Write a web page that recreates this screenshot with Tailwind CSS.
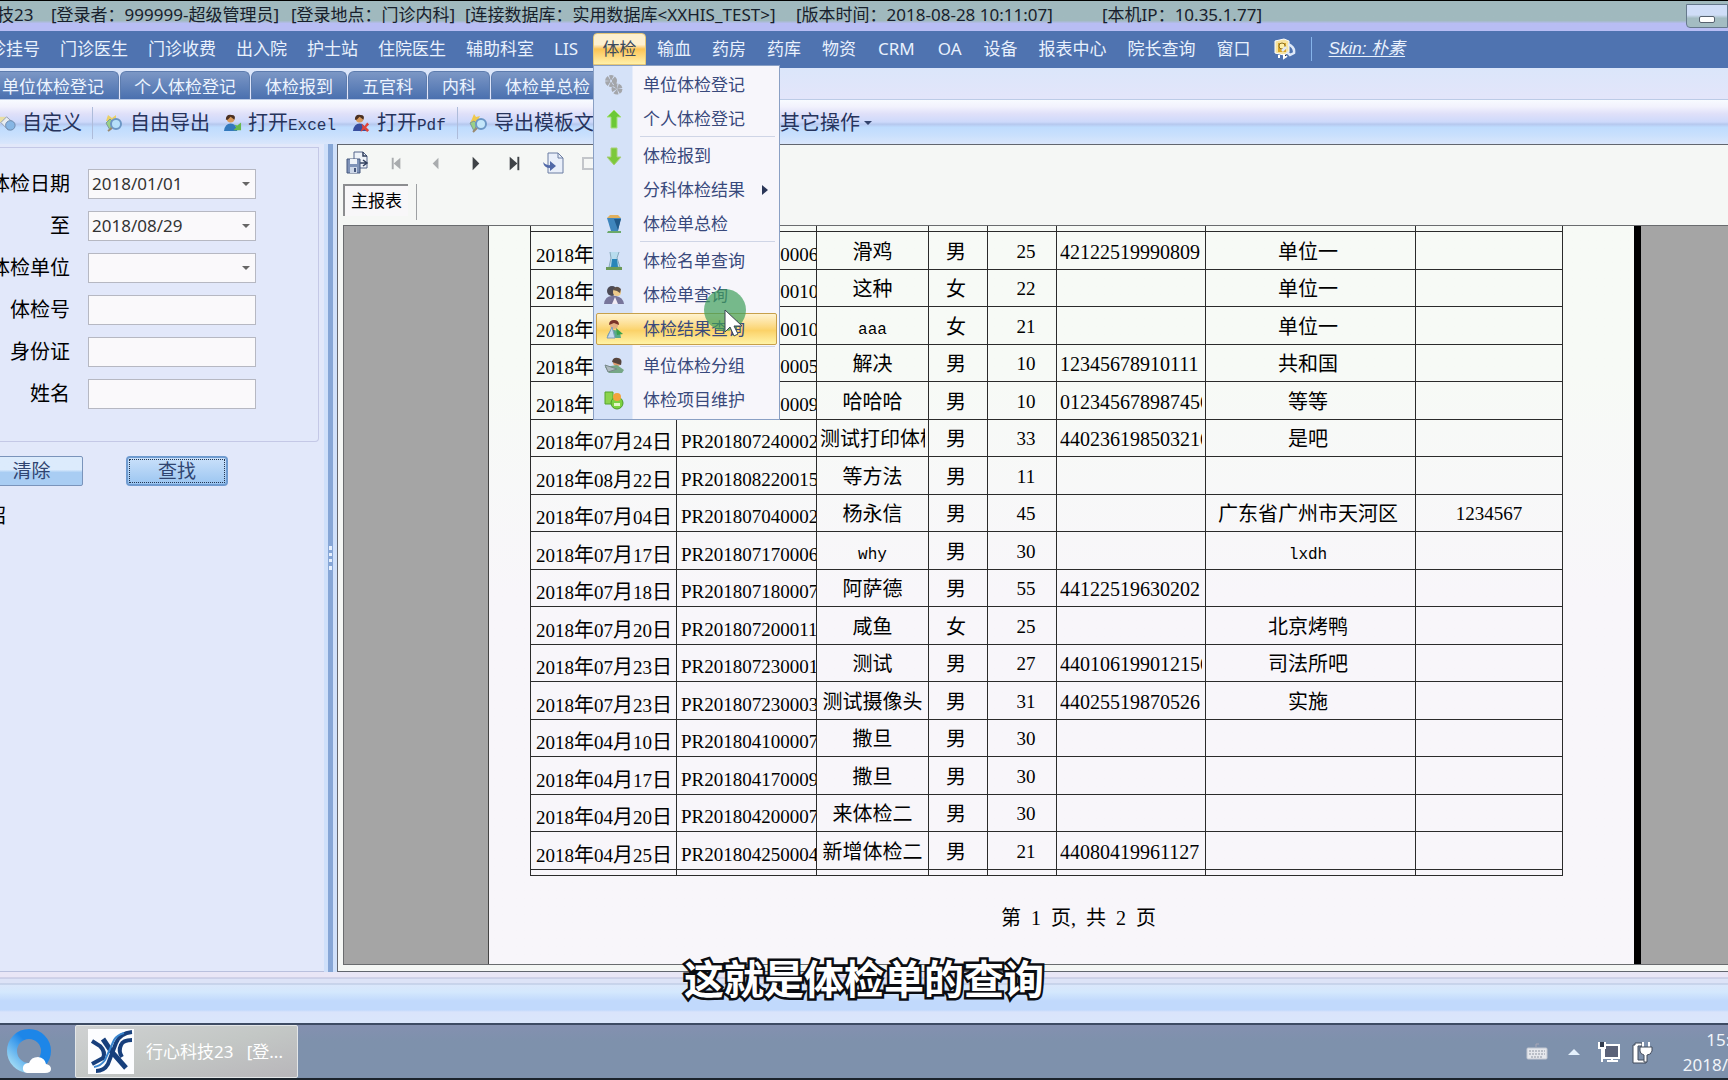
<!DOCTYPE html>
<html lang="zh-CN">
<head>
<meta charset="utf-8">
<title>行心科技23</title>
<script src="https://cdn.jsdelivr.net/npm/@tailwindcss/browser@4"></script>
</head>
<body class="relative flex min-h-screen flex-col overflow-x-hidden bg-[#e2e8fa] font-['Noto_Sans','Noto_Sans_CJK_SC',sans-serif] text-[17px] leading-6 text-black">

<header class="flex h-[31px] items-center justify-between overflow-hidden border-t border-black bg-linear-to-b from-[#a0b9be] from-65% to-[#b8bdf4] to-75%">
  <div class="-ml-[54px] flex h-full items-center whitespace-pre pb-0.5 text-[#17202c]">
    <span class="w-[105px]">行心科技23</span>
    <span class="w-60">[登录者：999999-超级管理员]</span>
    <span class="w-[174px]">[登录地点：门诊内科]</span>
    <span class="w-[331px]">[连接数据库：实用数据库&lt;XXHIS_TEST&gt;]</span>
    <span class="w-[306px]">[版本时间：2018-08-28 10:11:07]</span>
    <span>[本机IP：10.35.1.77]</span>
  </div>
  <button aria-label="最小化" class="flex h-6 w-[42px] items-end justify-center rounded-bl border border-[#66798d] bg-linear-to-b from-[#cfddf7] from-45% to-[#a3bcc2] to-60% pb-1"><span class="h-[7px] w-4 rounded-xs border border-[#56616f] bg-white"></span></button>
</header>

<nav class="flex h-[37px] items-center bg-[#4f73b0] pb-0.5 text-[#e9f1fd]">
  <div class="-ml-[28px] flex gap-[20px] whitespace-nowrap">
    <a href="#">门诊挂号</a><a href="#">门诊医生</a><a href="#">门诊收费</a><a href="#">出入院</a><a href="#">护士站</a><a href="#">住院医生</a><a href="#">辅助科室</a><a href="#">LIS</a>
  </div>
  <div class="relative ml-[15px]">
    <button class="h-8 w-[53px] rounded-t-sm border border-[#e6c878] bg-linear-to-b from-[#fdf0cf] from-35% via-[#fbc351] via-50% to-[#fff0a8] text-[#3c4a5c]">体检</button>
    <div class="absolute left-0 top-8 z-10 flex w-[187px] flex-col border border-[#8aa0c4] bg-[linear-gradient(90deg,#d5e2f8_38px,#f7f6fb_39px)] py-0.5 text-[#39497c]" role="menu" id="menu"></div>
  </div>
  <div class="ml-[11px] flex items-center gap-[21px] whitespace-nowrap">
    <a href="#">输血</a><a href="#">药房</a><a href="#">药库</a><a href="#">物资</a><a href="#" class="px-px">CRM</a><a href="#" class="px-px">OA</a><a href="#">设备</a><a href="#">报表中心</a><a href="#">院长查询</a><a href="#">窗口</a>
    <svg class="size-6" viewBox="0 0 24 24"><path d="M3 4l9-2 5 2v11l-5 3-9-2z" fill="#f6e3a0" stroke="#fff" /><path d="M6 6h8v9H6z" fill="#d9a62c"/><circle cx="10" cy="9" r="3" fill="#fff0a8" stroke="#8a6d20"/><path d="M10 14l4-4M16 7q7 3 6 9l-4 2-3-3" fill="none" stroke="#dfe9f8" stroke-width="2.5"/><path d="M7 18v3M12 17v4l3-2" stroke="#fff" stroke-width="2"/></svg>
    <span class="-ml-1.5 h-6 w-px bg-[#86b4ea]"></span>
    <a href="#" class="-ml-1 font-['Liberation_Sans','Noto_Sans_CJK_SC',sans-serif] italic underline underline-offset-2">Skin: 朴素</a>
  </div>
</nav>

<div class="flex h-8 items-end gap-px overflow-hidden whitespace-nowrap border-b border-[#bccbe6] bg-linear-to-b from-[#dbe6fa] to-[#e3e5fa] text-[#edf4ff]" role="tablist">
  <button role="tab" class="-ml-[13px] h-7 rounded-t-md border border-b-0 border-[#5d7cae] bg-linear-to-b from-[#7c97c5] to-[#4a70af] px-[14px] pt-0.5">单位体检登记</button>
  <button role="tab" class="h-7 rounded-t-md border border-b-0 border-[#5d7cae] bg-linear-to-b from-[#7c97c5] to-[#4a70af] px-[13px] pt-0.5">个人体检登记</button>
  <button role="tab" class="h-7 rounded-t-md border border-b-0 border-[#5d7cae] bg-linear-to-b from-[#7c97c5] to-[#4a70af] px-[13px] pt-0.5">体检报到</button>
  <button role="tab" class="h-7 rounded-t-md border border-b-0 border-[#5d7cae] bg-linear-to-b from-[#7c97c5] to-[#4a70af] px-[13px] pt-0.5">五官科</button>
  <button role="tab" class="h-7 rounded-t-md border border-b-0 border-[#5d7cae] bg-linear-to-b from-[#7c97c5] to-[#4a70af] px-[13px] pt-0.5">内科</button>
  <button role="tab" class="h-7 rounded-t-md border border-b-0 border-[#5d7cae] bg-linear-to-b from-[#7c97c5] to-[#4a70af] px-[13px] pt-0.5">体检单总检</button>
</div>

<div class="flex h-11 items-center whitespace-nowrap bg-[linear-gradient(180deg,#f8fbff_0%,#f2f2fd_15%,#dfe0f9_32%,#cdd9fb_50%,#b6c8ee_55%,#bfdcfe_62%,#c9e0fd_80%,#dae6fb_100%)] pt-0.5 text-xl text-[#26335c]">
  <button class="-ml-0.5 flex w-[94px] items-center gap-[5px]"><svg class="size-[19px] shrink-0" viewBox="0 0 20 20"><path d="M1 3h8v6H1z" fill="#e9dfa4"/><path d="M3 9l6-6 8 7-6 7z" fill="#e8edf2" stroke="#8e9bb0"/><circle cx="13" cy="12" r="5" fill="#86b6e4" stroke="#6d87aa"/></svg>自定义</button>
  <span class="h-8 w-px bg-[#aebcda]"></span>
  <button class="ml-[11px] flex w-[119px] items-center gap-[6px]"><svg class="size-5 shrink-0" viewBox="0 0 20 20"><path d="M4 2l4 3 4-3v6H2z" fill="#ead067"/><path d="M2 10l4-4 3 3-3 8z" fill="#9ad087" stroke="#7c9a99"/><circle cx="12" cy="11" r="5" fill="#b6e0fa" stroke="#6c97c6" stroke-width="2"/><path d="M8 15l-4 3" stroke="#9a8a70" stroke-width="2"/></svg>自由导出</button>
  <button class="flex w-[129px] items-center gap-[6px]"><svg class="size-[19px] shrink-0" viewBox="0 0 20 20"><circle cx="8" cy="5" r="4" fill="#d99a5c"/><path d="M3 6q0-6 6-5 5 0 3 5l-4-3-3 3z" fill="#4b3022"/><path d="M1 18q1-8 7-8t7 8z" fill="#3379bd"/><path d="M19 9v8h-8l3-3-2-3 3 1z" fill="#67b94c"/></svg><span>打开<span class="font-['Liberation_Mono',monospace] text-base">Excel</span></span></button>
  <button class="flex w-[105px] items-center gap-[6px]"><svg class="size-[19px] shrink-0" viewBox="0 0 20 20"><circle cx="8" cy="5" r="4" fill="#d99a5c"/><path d="M3 6q0-6 6-5 5 0 3 5l-4-3-3 3z" fill="#4b3022"/><path d="M1 18q1-8 7-8t7 8z" fill="#394e9e"/><path d="M10 10l3 3 3-4 2 2-3 3 3 3-2 2-3-3-4 3 2-5z" fill="#e04338"/></svg><span>打开<span class="font-['Liberation_Mono',monospace] text-base">Pdf</span></span></button>
  <span class="h-8 w-px bg-[#aebcda]"></span>
  <button class="ml-[10px] flex w-[312px] items-center gap-[6px]"><svg class="size-5 shrink-0" viewBox="0 0 20 20"><path d="M6 1l2 3 4-1-2 4 3 3H2l2-4z" fill="#efc94d"/><path d="M2 10l4-2 3 3-3 7z" fill="#9ad087" stroke="#7c9a99"/><circle cx="13" cy="11" r="5" fill="#c3e6fa" stroke="#6c97c6" stroke-width="2"/><path d="M9 15l-4 4" stroke="#9a8a70" stroke-width="2"/></svg>导出模板文件</button>
  <button class="flex items-center gap-1">其它操作<span class="border-x-4 border-t-4 border-x-transparent border-t-[#33436c]"></span></button>
</div>

<main class="flex flex-1">
  <aside class="flex w-[324px] shrink-0 flex-col overflow-hidden border-b border-[#b9c0dd]">
    <form id="filters" class="mr-[5px] mt-[3px] flex h-[295px] flex-col gap-3 rounded-br border-b border-r border-t border-[#c4c8e6] pt-[21px] text-xl"></form>
    <div class="mt-[14px] flex gap-[43px] text-[19px] text-[#2f4470]">
      <button class="-ml-5 h-[30px] w-[103px] rounded-xs border border-[#7a94bb] bg-linear-to-b from-[#dcebfc] from-45% to-[#a9cdf3] to-55%">清除</button>
      <button class="h-[30px] w-[102px] rounded-sm border-2 border-[#6f9bd0] bg-linear-to-b from-[#c9e0fa] to-[#9cc6f1] p-px"><span class="flex h-full items-center justify-center border border-dotted border-[#22344f]">查找</span></button>
    </div>
    <p class="-ml-[14px] mt-4 text-xl">绍</p>
  </aside>
  <div class="flex w-[13px] shrink-0 items-center justify-center border-x-4 border-[#cfe0fa] bg-[#86a6d6]"><span class="h-6 border-l-3 border-dotted border-[#e7f0fd]"></span></div>

  <section class="flex min-w-0 flex-1 flex-col border border-r-0 border-[#62666f] bg-[#f5f7f5] pl-[5px]">
    <div class="flex h-9 items-center gap-4 pl-[3px]" role="toolbar">
      <button aria-label="保存"><svg class="size-6" viewBox="0 0 24 24"><path d="M8 1h9l4 4v12H8z" fill="#eef2f8" stroke="#55658a"/><path d="M17 1v4h4M14 12h6M17 9l4 3-4 3" fill="none" stroke="#33415f" stroke-width="1.5"/><path d="M1 8h13v14H1z" fill="#7f93b8" stroke="#45567c"/><path d="M4 8h7v5H4z" fill="#eef2f8"/><path d="M4 16h7v6H4z" fill="#cdd7e8"/><path d="M8 17h2v4H8z" fill="#45567c"/></svg></button>
      <button aria-label="首页"><svg class="size-[23px]" viewBox="0 0 24 24"><path d="M7 6v12" stroke="#a9acae" stroke-width="2"/><path d="M15 6v12l-7-6z" fill="#a9acae"/></svg></button>
      <button aria-label="上一页"><svg class="size-[23px]" viewBox="0 0 24 24"><path d="M14 6v12l-6-6z" fill="#a9acae"/></svg></button>
      <button aria-label="下一页"><svg class="size-[23px]" viewBox="0 0 24 24"><path d="M9 5v14l7-7z" fill="#3e4246"/></svg></button>
      <button aria-label="末页"><svg class="size-[23px]" viewBox="0 0 24 24"><path d="M7 5v14l8-7z" fill="#3e4246"/><path d="M16 5v14" stroke="#3e4246" stroke-width="2"/></svg></button>
      <button aria-label="导出"><svg class="size-6" viewBox="0 0 24 24"><path d="M6 2h10l5 5v15H6z" fill="#e9effa" stroke="#6b7ca2"/><path d="M16 2v5h5" fill="none" stroke="#6b7ca2"/><path d="M1 11q3 4 7 3v-4l6 5-6 5v-3q-6 0-7-6z" fill="#5169a8"/></svg></button>
      <button aria-label="打印"><svg class="size-6" viewBox="0 0 24 24"><path d="M1 7h13v11H1z" fill="none" stroke="#c3c6ca" stroke-width="2"/></svg></button>
    </div>
    <div class="flex h-11 items-start">
      <button class="mt-[3px] h-8 w-[65px] border-l-2 border-t-2 border-[#8c8d90] bg-[#f8f7f9]">主报表</button>
      <span class="ml-2 mt-[3px] h-9 w-px bg-[#9da0a3]"></span>
    </div>
    <div class="mb-1.5 flex flex-1 border-y border-l border-[#6a6c6f] bg-[#a5a5a5]">
      <div class="w-36 shrink-0"></div>
      <article class="min-w-0 flex-1 border-l border-[#444] bg-linear-to-b from-[#f7faf6] from-20% to-[#f8f6fa] to-50% pl-[41px]">
        <table class="w-[1033px] table-fixed border-separate border-spacing-0 border-l border-[#2b2b2b]">
          <colgroup><col class="w-[146px]"><col class="w-[140px]"><col class="w-[112px]"><col class="w-[59px]"><col class="w-[69px]"><col class="w-[149px]"><col class="w-[210px]"><col class="w-[147px]"></colgroup>
          <tbody id="rows"></tbody>
        </table>
        <p class="ml-[466px] mt-7 whitespace-pre font-['Liberation_Serif','Noto_Sans_CJK_SC',serif] text-xl"> 第  1  页,  共  2  页</p>
      </article>
      <div class="w-[7px] shrink-0 bg-black"></div>
      <div class="w-[87px] shrink-0"></div>
    </div>
  </section>
</main>

<div class="h-[51px] shrink-0 bg-[linear-gradient(180deg,#e9e6f6_0,#e9e6f6_5px,#b9bdda_6px,#dde3f7_7px,#dde3f7_11px,#b4c2dd_12px,#dbe7fb_13px,#d4e8fd_20px,#c1d9fc_29px,#c1d9fc_38px,#dae4fb_40px,#dae6fb_100%)]"></div>

<footer class="flex h-[57px] shrink-0 items-center overflow-hidden border-b-2 border-t-2 border-b-[#1c242c] border-t-[#3d4b63] bg-linear-to-b from-[#8490b0] to-[#7e91ac] to-30%">
  <a href="#" aria-label="浏览器" class="ml-[7px]"><svg class="h-[46px] w-[46px]" viewBox="0 0 46 46"><defs><linearGradient id="ring" x1="1" y1="0" x2="0" y2="1"><stop offset=".4" stop-color="#1d86e8"/><stop offset="1" stop-color="#a9e0f5"/></linearGradient></defs><circle cx="22" cy="22" r="17" fill="none" stroke="url(#ring)" stroke-width="10"/><path d="M20 44q-5-1-4-6 1-4 6-4 2-6 9-6 7 1 8 7 5 1 5 5t-6 4z" fill="#fff"/></svg></a>
  <button class="ml-[22px] flex h-[53px] w-[223px] items-center gap-3 rounded-xs border border-[#e3e6e8] bg-linear-to-br from-[#cfd1d2] via-[#c3c7c5] to-[#b8b6ba] pl-3 text-white">
    <svg class="h-[45px] w-[46px] shrink-0" viewBox="0 0 46 45"><path fill="#fcfdff" d="M0 0h46v45H0z"/><g fill="none" stroke="#173f7c" stroke-width="4"><path d="M4 12l8 5q6 6 3 12l-11 6M8 42q8 0 12-7l8-21Q32 4 44 3M44 11q-9 0-11 5-3 6 1 12"/><path d="M15 10l8 12 15 17" stroke-width="5"/><path d="M6 38q7-1 11-7l9-20Q29 6 36 4" stroke="#3b86cf" stroke-width="2"/></g></svg>
    <span class="whitespace-pre">行心科技23   [登...</span>
  </button>
  <div class="-mr-[46px] ml-auto flex items-center text-[#f1f5fa]">
    <svg class="h-5 w-[22px]" viewBox="0 0 22 20"><path d="M10 5V2h3" stroke="#a7a6b5" fill="none"/><rect x="1" y="6" width="20" height="11" rx="1" fill="#e5e7ec" stroke="#c2c7d1"/><path d="M3 9h16M3 12h16M5 15h12" stroke="#8f96a3" stroke-dasharray="2 1"/></svg>
    <span class="ml-5 border-x-6 border-b-6 border-x-transparent border-b-[#e5f1fc]"></span>
    <svg class="ml-[17px] size-6" viewBox="0 0 24 24"><path d="M7 5h15v13H7z" fill="#5b6278" stroke="#fff" stroke-width="2"/><path d="M2 2v6h6V2M5 8v14M10 21h11M15 18v3" fill="none" stroke="#fff" stroke-width="2"/><path d="M3 2v5h4V2" fill="#333c4e"/></svg>
    <svg class="ml-[9px] size-6" viewBox="0 0 24 24"><path d="M5 3h7v3H8v14h8v3H3V5h2z" fill="#fff" stroke="#414a5b"/><path d="M13 2v5M19 2v5" stroke="#fff" stroke-width="2"/><path d="M10 7h12v4q-1 4-5 4v7h-3v-7q-4-1-4-4z" fill="#fff" stroke="#414a5b"/></svg>
    <p class="ml-7 w-[92px] text-center leading-[25px]">15:27<br>2018/08/29</p>
  </div>
</footer>

<p class="absolute bottom-[79px] left-0 right-0 z-20 text-center font-['Noto_Sans_CJK_SC',sans-serif] text-[40px] font-bold leading-[48px] text-white [-webkit-text-stroke:5px_#0b0d12] [paint-order:stroke_fill]">这就是体检单的查询</p>

<script>
const person = (hair, coat, extra) => `<circle cx="10" cy="6" r="4" fill="#e3b083"/><path d="M5 6q0-5 5-5t5 5l-5-2z" fill="${hair}"/><path d="M3 19q1-8 7-8t7 8z" fill="${coat}"/>${extra}`;
const icons = {
  gears: '<g fill="none" stroke="#a4a6aa"><circle cx="7" cy="6" r="3.5" stroke-width="5" stroke-dasharray="3 .7"/><circle cx="13" cy="14" r="3" stroke-width="5" stroke-dasharray="3 .7"/></g>',
  up: '<path d="M10 1l7 7h-4v11H7V8H3z" fill="#6cc936" stroke="#a6e07d"/>',
  down: '<path d="M10 19l7-8h-4V2H7v9H3z" fill="#7cc93b" stroke="#a9cf79"/>',
  bin: '<path d="M3 4h14l-3 13H7z" fill="#3f86bd"/><path d="M10 5h7l-3 11z" fill="#215a8b"/><path d="M3 4l3-3 8 0 3 3z" fill="#e0b05f"/><path d="M4 17h13v2H3z" fill="#6ba96a"/>',
  flask: '<path d="M6 1l1 6-2 9h11l-3-9 2-6" fill="#b8dcee" stroke="#88a9bd"/><path d="M8 8h5l1 8H7z" fill="#2885b9"/><path d="M2 16h16v3H2z" fill="#6b9a58"/>',
  pair: '<circle cx="8" cy="6" r="5" fill="#4c4a55"/><circle cx="13" cy="7" r="4" fill="#edca8b"/><path d="M9 5q3-6 8-1l-1 4-3-2z" fill="#5d5048"/><path d="M0 19q1-8 8-8h4q7 1 8 8z" fill="#77759b"/><path d="M8 19l3-7 3 7z" fill="#f1ecf4"/>',
  green: person('#7a3329', '#58a98a', '<path d="M3 19l5-11 3 11z" fill="#c5d9ec" stroke="#7d9cc0"/><path d="M12 9l7 6-6 1z" fill="#39a14c"/>'),
  group: '<circle cx="13" cy="6" r="4" fill="#dc9a6d"/><path d="M8 6q1-5 6-4 5 1 3 7z" fill="#55443d"/><path d="M1 11l12-2 7 5-2 3H5z" fill="#76a786"/><path d="M1 9l12 4-9 3z" fill="#aeb9be" stroke="#788"/>',
  items: '<path d="M1 2h8v12H1z" fill="#8bd34d" stroke="#55a52d"/><circle cx="13" cy="13" r="6" fill="#7bd13f" stroke="#4c9c2a"/><circle cx="13" cy="7" r="4" fill="#f3a23b"/><path d="M10 13h6v3h-6z" fill="#e4f6c8"/>',
};
const menu = [['单位体检登记', 'gears'], ['个人体检登记', 'up'], null, ['体检报到', 'down'], ['分科体检结果', ''], ['体检单总检', 'bin'], null,
  ['体检名单查询', 'flask'], ['体检单查询', 'pair'], ['体检结果查询', 'green'], null, ['单位体检分组', 'group'], ['体检项目维护', 'items']];
document.getElementById('menu').innerHTML = menu.map(item => {
  if (!item) return '<div class="ml-[46px] mr-1 h-[3px] border-t border-[#cfd5e6]"></div>';
  const [label, icon] = item;
  const active = label === '体检结果查询' ? 'border-[#c7a04b] bg-linear-to-b from-[#fff3cf] via-[#fbd268] via-55% to-[#fff3a6]' : 'border-transparent';
  const arrow = label === '分科体检结果' ? '<span class="ml-[17px] border-y-5 border-l-6 border-y-transparent border-l-[#2b3658]"></span>' : '';
  return `<button role="menuitem" class="mx-0.5 my-px flex h-8 items-center whitespace-nowrap rounded-xs border pl-[7px] ${active}"><svg class="mr-[19px] size-5 shrink-0" viewBox="0 0 20 20">${icons[icon] || ''}</svg>${label}${arrow}</button>`;
}).join('') + `<div class="pointer-events-none absolute left-[110px] top-[223px] size-[42px] rounded-full bg-[#3f9f5b]/70"></div>
  <svg class="pointer-events-none absolute left-[130px] top-[243px] h-7 w-5" viewBox="0 0 20 28"><path d="M1 1v22l5-5 4 9 4-2-4-8h8z" fill="#fff" stroke="#3b4652"/></svg>`;

const fields = [['体检日期', '2018/01/01', true], ['至', '2018/08/29', true], ['体检单位', '', true], ['体检号', ''], ['身份证', ''], ['姓名', '']];
document.getElementById('filters').innerHTML = fields.map(([label, value, list], i) => `
  <div class="flex h-[30px] items-center">
    <label for="f${i}" class="mr-[18px] flex w-[70px] shrink-0 justify-end whitespace-nowrap">${label}</label>
    <div class="relative">${list
      ? `<select id="f${i}" class="block h-[30px] w-[168px] appearance-none border border-[#b6b8c2] bg-[#faf9fb] px-[3px] text-[17px] text-[#333]"><option>${value}</option></select><span class="pointer-events-none absolute right-[6px] top-[13px] border-x-4 border-t-4 border-x-transparent border-t-[#666]"></span>`
      : `<input id="f${i}" class="block h-[30px] w-[168px] border border-[#b6b8c2] bg-[#faf9fb] px-1 text-[17px]">`}</div>
  </div>`).join('');

const rows = [
  ['07','20','PR201807200006','滑鸡','男',25,'42122519990809','单位一',''],
  ['07','20','PR201807200010','这种','女',22,'','单位一',''],
  ['07','20','PR201807200010','aaa','女',21,'','单位一',''],
  ['07','20','PR201807200005','解决','男',10,'12345678910111','共和国',''],
  ['07','20','PR201807200009','哈哈哈','男',10,'012345678987456','等等',''],
  ['07','24','PR201807240002','测试打印体检','男',33,'440236198503216','是吧',''],
  ['08','22','PR201808220015','等方法','男',11,'','',''],
  ['07','04','PR201807040002','杨永信','男',45,'','广东省广州市天河区','1234567'],
  ['07','17','PR201807170006','why','男',30,'','lxdh',''],
  ['07','18','PR201807180007','阿萨德','男',55,'44122519630202','',''],
  ['07','20','PR201807200011','咸鱼','女',25,'','北京烤鸭',''],
  ['07','23','PR201807230001','测试','男',27,'440106199012156','司法所吧',''],
  ['07','23','PR201807230003','测试摄像头','男',31,'44025519870526','实施',''],
  ['04','10','PR201804100007','撒旦','男',30,'','',''],
  ['04','17','PR201804170009','撒旦','男',30,'','',''],
  ['04','20','PR201804200007','来体检二','男',30,'','',''],
  ['04','25','PR201804250004','新增体检二','男',21,'44080419961127','',''],
];
const big = t => `<span class="text-xl leading-6">${t}</span>`;
const mono = t => /^[a-z]+$/.test(t) ? `<span class="font-['Liberation_Mono',monospace] text-base leading-6">${t}</span>` : t;
const cell = (content, cls) => `<td class="border-b border-r border-[#2b2b2b] p-0"><div class="h-6 whitespace-nowrap leading-6 ${cls}">${content}</div></td>`;
const spacer = `<tr class="h-[6px]">${'<td class="border-b border-r border-[#2b2b2b] p-0"></td>'.repeat(8)}</tr>`;
document.getElementById('rows').innerHTML = spacer + rows.map(([m, d, no, name, sex, age, id, unit, tel]) => `
  <tr class="font-['Liberation_Serif','Noto_Sans_CJK_SC',serif] text-xl even:h-[38px] odd:h-[37px]">
    ${cell(`2018${big('年')}${m}${big('月')}${d}${big('日')}`, 'mt-2 overflow-hidden pl-[5px] text-[19px]')}
    ${cell(no, 'mt-2 overflow-hidden pl-1 text-[19px]')}
    ${cell(mono(name), 'mx-[3px] mt-0.5 overflow-hidden text-center')}
    ${cell(sex, 'mt-0.5 pr-1 text-center')}
    ${cell(age, 'mt-0.5 pl-2 text-center text-[19px]')}
    ${cell(id, 'mx-[3px] mt-0.5 overflow-hidden')}
    ${cell(mono(unit), 'mt-0.5 pr-[5px] text-center')}
    ${cell(tel, 'mt-0.5 text-center text-[19px]')}
  </tr>`).join('') + spacer;
</script>
</body>
</html>
